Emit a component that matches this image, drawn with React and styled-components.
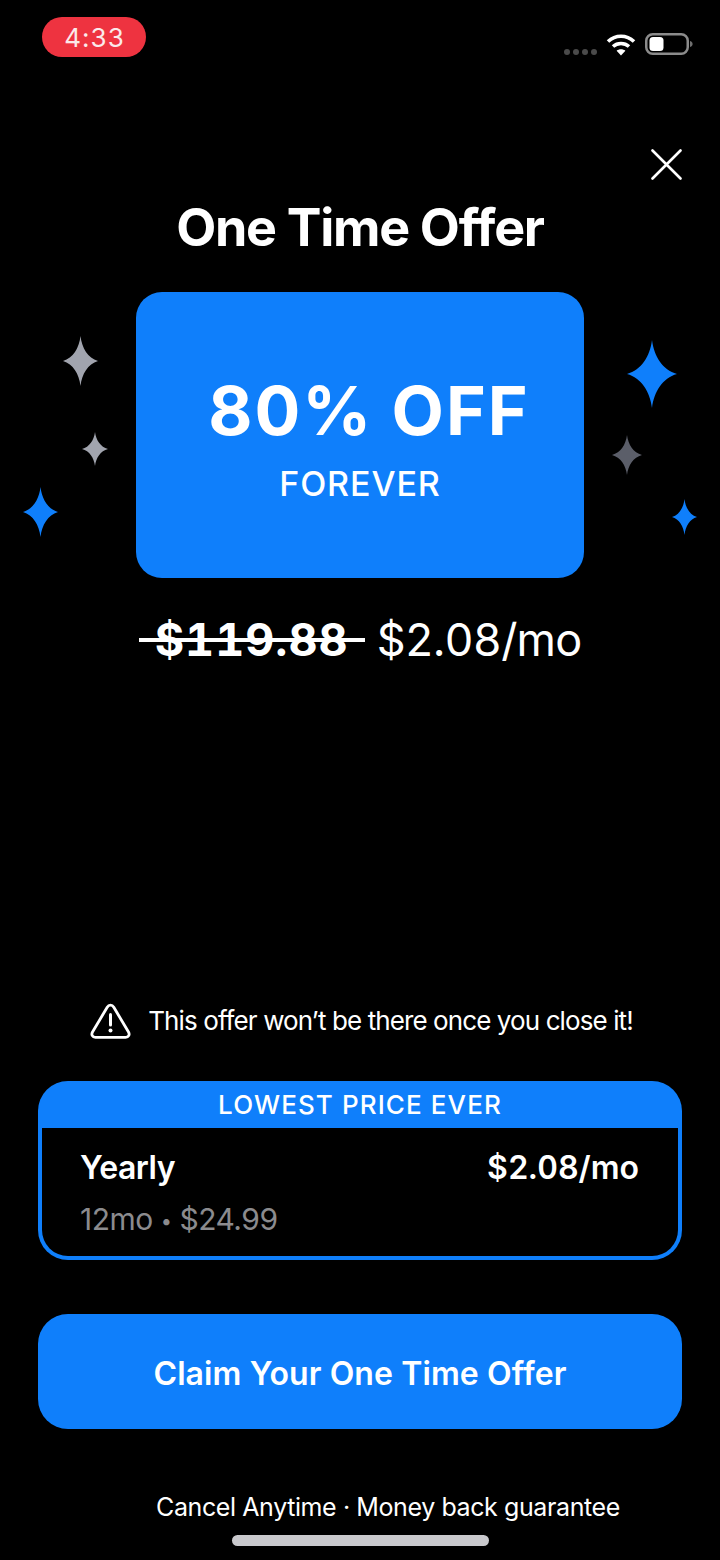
import React from "react";
import styled, { createGlobalStyle } from "styled-components";

const BLUE = "#0f7ffb";

const Global = createGlobalStyle`
  html, body { margin: 0; padding: 0; background: #000; }
  body { font-family: Inter, "Liberation Sans", sans-serif; color: #fff; }
  * { box-sizing: border-box; }
`;

const Page = styled.div`
  position: relative;
  width: 720px;
  height: 1560px;
  background: #000;
  display: flex;
  flex-direction: column;
  overflow: hidden;
`;

const StatusBar = styled.div`
  height: 60px;
  padding: 17px 27px 0 42px;
  display: flex;
  justify-content: space-between;
  align-items: flex-start;
`;

const TimePill = styled.div`
  width: 104px;
  height: 40px;
  border-radius: 20px;
  background: #ee3340;
  color: #fbe9ea;
  font-size: 26px;
  line-height: 41px;
  letter-spacing: 1px;
  text-align: center;
  padding-left: 1px;
`;

const StatusIcons = styled.div`
  display: flex;
  align-items: flex-start;
  margin-top: 16px;
`;

const SignalDots = styled.div`
  display: flex;
  gap: 3px;
  margin: 16px 9px 0 0;
`;

const SignalDot = styled.span`
  width: 6px;
  height: 6px;
  border-radius: 50%;
  background: #4a4a4a;
`;

const CloseRow = styled.div`
  display: flex;
  justify-content: flex-end;
  padding: 89px 38px 0 0;
`;

const Title = styled.h1`
  margin: 19px 0 0;
  font-size: 52px;
  line-height: 58px;
  font-weight: 700;
  letter-spacing: -1.3px;
  text-align: center;
`;

const Hero = styled.div`
  display: flex;
  justify-content: center;
  margin-top: 35px;
`;

const OfferCard = styled.div`
  width: 448px;
  height: 286px;
  border-radius: 26px;
  background: ${BLUE};
  display: flex;
  flex-direction: column;
  align-items: center;
  padding-top: 77px;
`;

const OfferHeadline = styled.div`
  font-size: 68px;
  line-height: 82px;
  font-weight: 700;
  letter-spacing: 2px;
  margin-left: 18px;
`;

const OfferSub = styled.div`
  margin-top: 13px;
  font-size: 34px;
  line-height: 40px;
  font-weight: 500;
  letter-spacing: 0.9px;
`;

const Sparkle = styled.svg`
  position: absolute;
  left: ${(p) => p.$x - p.$w / 2}px;
  top: ${(p) => p.$y - p.$h / 2}px;
  width: ${(p) => p.$w}px;
  height: ${(p) => p.$h}px;
  fill: ${(p) => p.$color};
`;

const PriceLine = styled.div`
  margin-top: 34px;
  display: flex;
  justify-content: center;
  align-items: center;
  gap: 12px;
  font-size: 45px;
  line-height: 56px;
  font-variant-numeric: tabular-nums;
`;

const OldPrice = styled.span`
  position: relative;
  padding: 0 16px;
  font-weight: 700;
  letter-spacing: 1px;
  &::after {
    content: "";
    position: absolute;
    left: 0;
    right: 0;
    top: 26px;
    height: 4px;
    background: #fff;
  }
`;

const NewPrice = styled.span`
  font-weight: 400;
  letter-spacing: -0.8px;
`;

const Spacer = styled.div`
  flex: 1;
`;

const Warning = styled.div`
  display: flex;
  justify-content: center;
  align-items: center;
  gap: 17px;
  padding-left: 3px;
  font-size: 26px;
  line-height: 40px;
  letter-spacing: -0.9px;
`;

const PlanCard = styled.div`
  margin: 40px 38px 0;
  height: 179px;
  padding: 0 4px 4px;
  border-radius: 30px;
  background: ${BLUE};
  display: flex;
  flex-direction: column;
`;

const PlanBanner = styled.div`
  height: 47px;
  text-align: center;
  font-size: 26px;
  line-height: 47px;
  font-weight: 500;
  letter-spacing: 1.1px;
`;

const PlanBody = styled.div`
  flex: 1;
  padding: 20px 39px 0 38px;
  background: #000;
  border-radius: 0 0 26px 26px;
  display: flex;
  flex-direction: column;
  gap: 11px;
`;

const PlanRow = styled.div`
  display: flex;
  justify-content: space-between;
  font-size: 32px;
  line-height: 40px;
  font-weight: 600;
  letter-spacing: -0.5px;
  font-variant-numeric: tabular-nums;
`;

const PlanPrice = styled.span`
  letter-spacing: 0;
`;

const PlanMeta = styled.div`
  font-size: 30px;
  line-height: 40px;
  color: #8b8b8e;
  letter-spacing: -0.5px;
`;

const MetaDot = styled.span`
  font-size: 20px;
  vertical-align: 2px;
`;

const ClaimButton = styled.button`
  display: block;
  margin: 54px 38px 0;
  height: 115px;
  padding: 4px 0 0;
  border: 0;
  border-radius: 30px;
  background: ${BLUE};
  color: #fff;
  font-family: inherit;
  font-size: 32px;
  font-weight: 600;
  letter-spacing: 0.1px;
`;

const Footer = styled.div`
  margin-top: 62px;
  padding-left: 56px;
  text-align: center;
  font-size: 25px;
  line-height: 32px;
  letter-spacing: -0.4px;
`;

const HomeBarRow = styled.div`
  height: 37px;
  padding-top: 12px;
  display: flex;
  justify-content: center;
`;

const HomeBar = styled.div`
  width: 257px;
  height: 11px;
  margin-left: 1px;
  border-radius: 6px;
  background: #c9c9cd;
`;

const sparklePath =
  "M50 0C54 24 71 44 100 50C71 56 54 76 50 100C46 76 29 56 0 50C29 44 46 24 50 0Z";

const sparkles = [
  { x: 80, y: 361, w: 35, h: 50, color: "#a1a4ae" },
  { x: 94.5, y: 449, w: 26, h: 34, color: "#a1a4ae" },
  { x: 40.5, y: 512, w: 35, h: 50, color: BLUE },
  { x: 652, y: 374, w: 50, h: 68, color: BLUE },
  { x: 627, y: 455, w: 30, h: 40, color: "#5b5e69" },
  { x: 684.5, y: 517, w: 25, h: 36, color: BLUE },
];

function WifiIcon() {
  return (
    <svg width="30" height="23" viewBox="0 0 30 23" fill="none" stroke="#fff" strokeWidth="3.6">
      <path d="M2 8.5C9.5 1.5 20.5 1.5 28 8.5" />
      <path d="M7 13.5C11.5 9.5 18.5 9.5 23 13.5" />
      <path d="M15 22.5L10.6 17.8C13 15.8 17 15.8 19.4 17.8Z" fill="#fff" stroke="none" />
    </svg>
  );
}

function BatteryIcon() {
  return (
    <svg width="48" height="23" viewBox="0 0 48 23" style={{ marginLeft: 9 }}>
      <rect x="1.25" y="1.25" width="41.5" height="19.5" rx="6.5" fill="none" stroke="#8b8b8b" strokeWidth="2.5" />
      <rect x="4.5" y="4" width="14" height="14" rx="3.5" fill="#fff" />
      <path d="M45 8C47 8.6 47.6 10 47.6 11C47.6 12 47 13.4 45 14Z" fill="#6f6f6f" />
    </svg>
  );
}

function CloseIcon() {
  return (
    <svg width="31" height="31" viewBox="0 0 31 31" fill="none" stroke="#fff" strokeWidth="2.6" strokeLinecap="round">
      <path d="M1.5 1.5L29.5 29.5M29.5 1.5L1.5 29.5" />
    </svg>
  );
}

function WarningIcon() {
  return (
    <svg width="41" height="36" viewBox="0 0 41 36" fill="none" stroke="#fff" strokeWidth="2.8" strokeLinejoin="round">
      <path d="M20.5 2.2C19 2.2 18 3 17.2 4.3L2.5 29C1 31.7 2.4 34.3 5.4 34.3H35.6C38.6 34.3 40 31.7 38.5 29L23.8 4.3C23 3 22 2.2 20.5 2.2Z" />
      <path d="M20.5 11.5V22" strokeLinecap="round" strokeWidth="3" />
      <circle cx="20.5" cy="27.6" r="2" fill="#fff" stroke="none" />
    </svg>
  );
}

export default function App() {
  return (
    <Page>
      <Global />
      <StatusBar>
        <TimePill>4:33</TimePill>
        <StatusIcons>
          <SignalDots>
            <SignalDot />
            <SignalDot />
            <SignalDot />
            <SignalDot />
          </SignalDots>
          <WifiIcon />
          <BatteryIcon />
        </StatusIcons>
      </StatusBar>
      <CloseRow>
        <CloseIcon />
      </CloseRow>
      <Title>One Time Offer</Title>
      <Hero>
        <OfferCard>
          <OfferHeadline>80% OFF</OfferHeadline>
          <OfferSub>FOREVER</OfferSub>
        </OfferCard>
      </Hero>
      {sparkles.map((s) => (
        <Sparkle
          key={`${s.x}-${s.y}`}
          $x={s.x}
          $y={s.y}
          $w={s.w}
          $h={s.h}
          $color={s.color}
          viewBox="0 0 100 100"
          preserveAspectRatio="none"
        >
          <path d={sparklePath} />
        </Sparkle>
      ))}
      <PriceLine>
        <OldPrice>$119.88</OldPrice>
        <NewPrice>$2.08/mo</NewPrice>
      </PriceLine>
      <Spacer />
      <Warning>
        <WarningIcon />
        <span>This offer won’t be there once you close it!</span>
      </Warning>
      <PlanCard>
        <PlanBanner>LOWEST PRICE EVER</PlanBanner>
        <PlanBody>
          <PlanRow>
            <span>Yearly</span>
            <PlanPrice>$2.08/mo</PlanPrice>
          </PlanRow>
          <PlanMeta>
            12mo <MetaDot>•</MetaDot> $24.99
          </PlanMeta>
        </PlanBody>
      </PlanCard>
      <ClaimButton>Claim Your One Time Offer</ClaimButton>
      <Footer>Cancel Anytime · Money back guarantee</Footer>
      <HomeBarRow>
        <HomeBar />
      </HomeBarRow>
    </Page>
  );
}
